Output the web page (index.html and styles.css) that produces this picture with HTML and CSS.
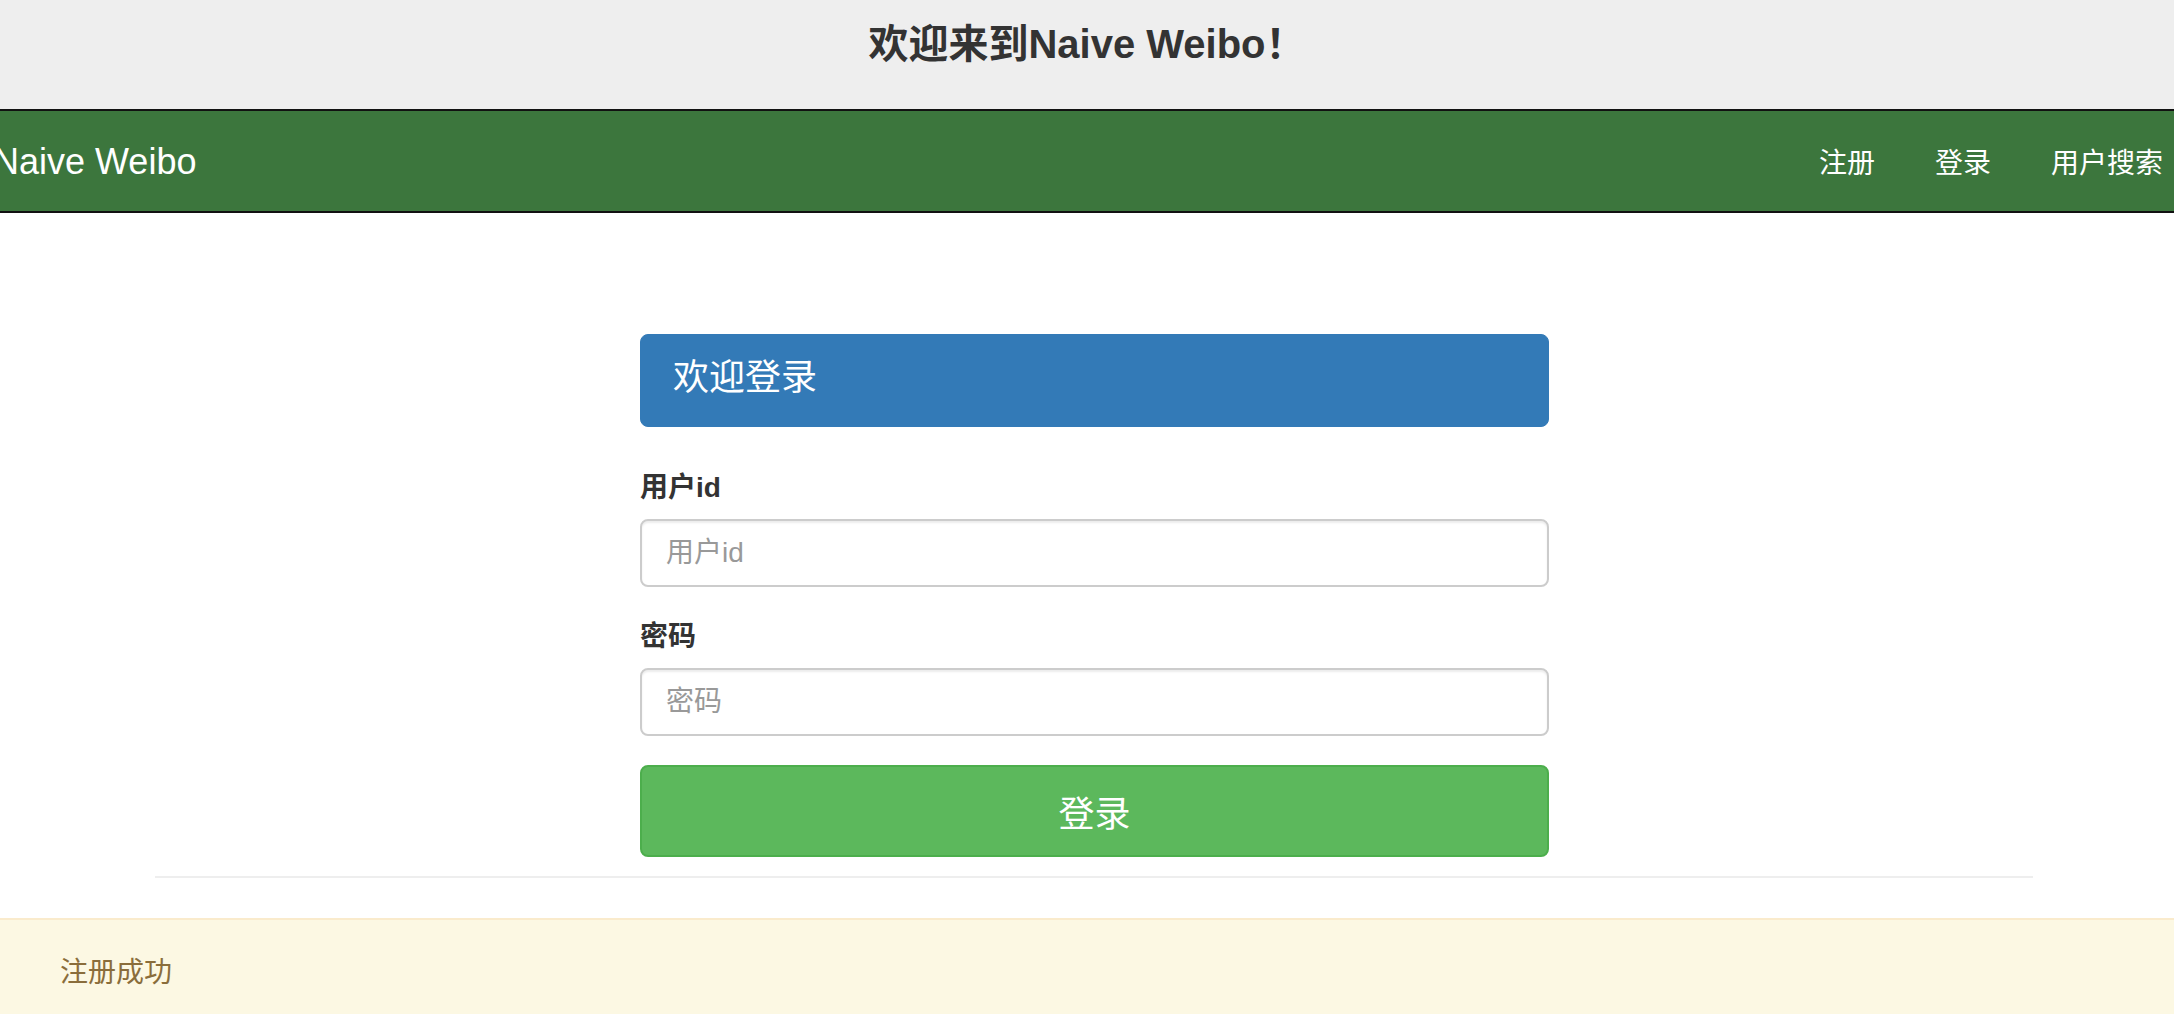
FILE: index.html
```html
<!DOCTYPE html>
<html lang="zh-CN">
<head>
<meta charset="utf-8">
<title>Naive Weibo</title>
<link rel="stylesheet" href="styles.css">
</head>
<body>
<header class="site-header">
  <h1 class="site-title">欢迎来到Naive Weibo！</h1>
</header>
<nav class="navbar">
  <a class="brand" href="#">Naive Weibo</a>
  <ul class="nav-links">
    <li><a href="#">注册</a></li>
    <li><a href="#">登录</a></li>
    <li><a href="#">用户搜索</a></li>
  </ul>
</nav>
<main class="login">
  <div class="panel-heading"><h3 class="panel-title">欢迎登录</h3></div>
  <form class="login-form">
    <div class="form-group">
      <label class="form-label" for="uid">用户id</label>
      <input class="form-input" id="uid" type="text" placeholder="用户id">
    </div>
    <div class="form-group">
      <label class="form-label" for="pwd">密码</label>
      <input class="form-input" id="pwd" type="password" placeholder="密码">
    </div>
    <button class="btn-login" type="button">登录</button>
  </form>
</main>
<hr class="divider">
<div class="alert">
  <span class="alert-text">注册成功</span>
  <span class="alert-close">×</span>
</div>
</body>
</html>
```
FILE: styles.css
```css
html, body {
  margin: 0;
  padding: 0;
  background: #fff;
  overflow: hidden;
}
body {
  font-family: "Liberation Sans", "Noto Sans CJK SC", sans-serif;
  color: #333;
  font-size: 28px;
}
.site-header {
  height: 109px;
  background: #eeeeee;
  display: flex;
  justify-content: center;
  align-items: flex-start;
}
.site-title {
  margin: 21px 0 0;
  font-size: 40px;
  line-height: 46px;
  font-weight: bold;
  color: #333;
}
.navbar {
  height: 100px;
  background: #3c763d;
  border-top: 2px solid #111;
  border-bottom: 2px solid #111;
  display: flex;
  align-items: center;
  justify-content: space-between;
}
.brand {
  color: #fff;
  text-decoration: none;
  font-size: 36px;
  line-height: 40px;
  margin-left: -7px;
  margin-top: 2px;
}
.nav-links {
  list-style: none;
  display: flex;
  margin: 0 -19px 0 0;
  padding: 0;
}
.nav-links a {
  display: block;
  padding: 0 30px;
  color: #fff;
  text-decoration: none;
  font-size: 28px;
  line-height: 40px;
  font-family: "Noto Sans CJK SC", sans-serif;
}
.login {
  width: 909px;
  margin: 121px 0 0 calc(50% - 447px);
}
.panel-heading {
  height: 93px;
  background: #337ab7;
  border: 1px solid #337ab7;
  box-sizing: border-box;
  border-radius: 8px;
  display: flex;
  align-items: center;
  padding: 0 30px 14px 32px;
}
.panel-title {
  margin: 0;
  color: #fff;
  font-size: 36px;
  font-weight: normal;
  line-height: 40px;
  font-family: "Noto Sans CJK SC", sans-serif;
}
.login-form {
  margin-top: 41px;
}
.form-group {
  margin-bottom: 30px;
}
.form-label {
  display: block;
  font-weight: bold;
  font-size: 28px;
  line-height: 40px;
  margin-bottom: 11px;
  color: #333;
}
.form-input {
  display: block;
  width: 100%;
  box-sizing: border-box;
  height: 68px;
  border: 2px solid #ccc;
  border-radius: 8px;
  padding: 0 24px;
  font-size: 28px;
  font-family: "Liberation Sans", "Noto Sans CJK SC", sans-serif;
  color: #555;
  box-shadow: inset 0 2px 2px rgba(0,0,0,.075);
  outline: none;
}
.form-input::placeholder {
  color: #999;
}
.btn-login {
  display: block;
  width: 100%;
  height: 92px;
  margin-top: -1px;
  background: #5cb85c;
  border: 2px solid #4cae4c;
  border-radius: 8px;
  color: #fff;
  font-size: 36px;
  font-family: "Noto Sans CJK SC", sans-serif;
  padding: 0;
  cursor: pointer;
}
.divider {
  margin: 19px 141px 0 155px;
  border: 0;
  border-top: 2px solid #eee;
  height: 0;
}
.alert {
  position: relative;
  margin-top: 40px;
  background: #fcf8e3;
  border-top: 2px solid #faebcc;
  height: 96px;
  padding: 30px 60px 0;
  box-sizing: border-box;
  color: #8a6d3b;
  overflow: hidden;
}
.alert-text {
  font-size: 28px;
  line-height: 40px;
  font-family: "Noto Sans CJK SC", sans-serif;
}
.alert-close {
  position: absolute;
  right: -24px;
  top: 24px;
  font-size: 42px;
  font-weight: bold;
  color: #000;
  opacity: .2;
  line-height: 1;
}
```
